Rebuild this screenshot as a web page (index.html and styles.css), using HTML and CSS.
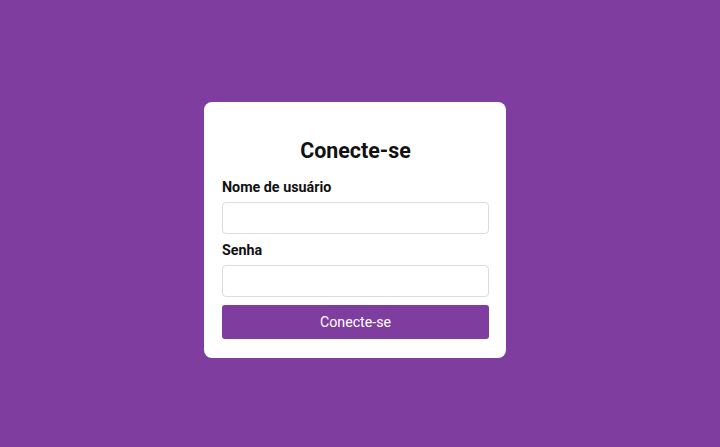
FILE: index.html
```html
<!DOCTYPE html>
<html lang="pt">
<head>
<meta charset="utf-8">
<title>Conecte-se</title>
<link rel="stylesheet" href="styles.css">
</head>
<body>
<main class="page">
  <form class="card">
    <h2 class="title">Conecte-se</h2>
    <label class="label" for="user">Nome de usuário</label>
    <input class="input" id="user" type="text">
    <label class="label" for="pass">Senha</label>
    <input class="input" id="pass" type="password">
    <button class="button" type="button">Conecte-se</button>
  </form>
</main>
</body>
</html>
```
FILE: styles.css
```css
* { box-sizing: border-box; }
html, body { margin: 0; height: 100%; }
body {
  background: #7f3d9f;
  font-family: Roboto, "Liberation Sans", sans-serif;
}
.page {
  height: 100%;
  display: flex;
  align-items: center;
  justify-content: center;
  padding: 13px 10px 0 0;
}
.card {
  width: 302px;
  background: #fff;
  border-radius: 8px;
  padding: 18px 17px 19px 18px;
  display: flex;
  flex-direction: column;
}
.title {
  margin: 18px 0 14px;
  font-size: 21.4px;
  line-height: 26px;
  font-weight: 700;
  text-align: center;
  color: #111;
}
.label {
  font-size: 14.3px;
  line-height: 18px;
  font-weight: 700;
  color: #111;
  margin-bottom: 6px;
}
.input {
  height: 32px;
  border: 1px solid #dcdcdc;
  border-radius: 4px;
  margin: 0 0 7px;
  font: inherit;
  padding: 0 8px;
}
.button {
  margin-top: 1px;
  height: 34px;
  border: none;
  border-radius: 3px;
  background: #7f3d9f;
  color: #fff;
  font: 14.2px/1 Roboto, "Liberation Sans", sans-serif;
}
```
